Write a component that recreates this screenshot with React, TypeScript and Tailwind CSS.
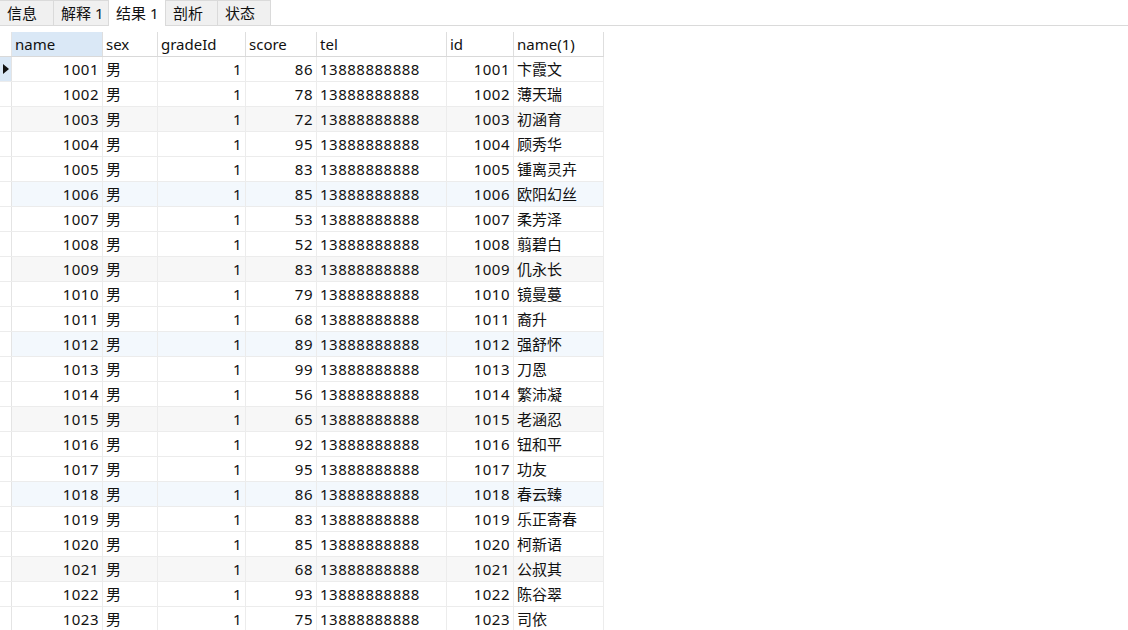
import React from 'react';

const rows: [number, string, number][] = [
  [1001, '卞霞文', 86],
  [1002, '薄天瑞', 78],
  [1003, '初涵育', 72],
  [1004, '顾秀华', 95],
  [1005, '锺离灵卉', 83],
  [1006, '欧阳幻丝', 85],
  [1007, '柔芳泽', 53],
  [1008, '翦碧白', 52],
  [1009, '仉永长', 83],
  [1010, '镜曼蔓', 79],
  [1011, '裔升', 68],
  [1012, '强舒怀', 89],
  [1013, '刀恩', 99],
  [1014, '繁沛凝', 56],
  [1015, '老涵忍', 65],
  [1016, '钮和平', 92],
  [1017, '功友', 95],
  [1018, '春云臻', 86],
  [1019, '乐正寄春', 83],
  [1020, '柯新语', 85],
  [1021, '公叔其', 68],
  [1022, '陈谷翠', 93],
  [1023, '司依', 75],
];

const tabs = ['信息', '解释 1', '结果 1', '剖析', '状态'];
const tabWidths = ['w-[54px]', 'w-[55px]', 'w-[57px]', 'w-[52px]', 'w-[53px]'];

const cols = [
  { label: 'name', w: 'w-[91px]' },
  { label: 'sex', w: 'w-[55px]' },
  { label: 'gradeId', w: 'w-[88px]' },
  { label: 'score', w: 'w-[71px]' },
  { label: 'tel', w: 'w-[130px]' },
  { label: 'id', w: 'w-[67px]' },
  { label: 'name(1)', w: 'w-[90px]' },
];

// every third row is shaded, alternating grey / pale blue
function rowBg(i: number) {
  if (i % 3 !== 2) return 'bg-white';
  return Math.floor(i / 3) % 2 === 0 ? 'bg-[#f7f7f7]' : 'bg-[#f3f8fd]';
}

const num = 'flex items-center justify-end pr-[3px] border-r border-[#ececec] tracking-[0.5px]';
const txt = 'flex items-center pl-[3px] border-r border-[#ececec]';

export default function App() {
  return (
    <div
      className="w-[1128px] h-[630px] overflow-hidden bg-white text-[15px] text-[#111]"
      style={{ fontFamily: '"Noto Sans", "Noto Sans CJK SC", sans-serif' }}
    >
      {/* Tab strip */}
      <div className="flex h-[26px] border-b border-[#dadada]">
        {tabs.map((t, i) => (
          <div
            key={t}
            className={`${tabWidths[i]} flex items-center pl-[7px] leading-none border-r border-[#dadada] ${
              i === 2 ? 'bg-white -mb-px h-[26px]' : 'bg-[#f0f0f0] border-t'
            }`}
          >
            {t}
          </div>
        ))}
      </div>

      <div className="h-[6px]" />

      {/* Grid */}
      <div className="flex flex-col w-fit">
        <div className="flex h-[25px] border-b border-[#d9d9d9]">
          <div className="w-[12px] border-r border-[#e4e4e4]" />
          {cols.map((c, i) => (
            <div
              key={c.label}
              className={`${c.w} flex items-center pl-[3px] border-r border-[#dedede] ${
                i === 0 ? 'bg-[#dae8f6]' : 'bg-white'
              }`}
            >
              {c.label}
            </div>
          ))}
        </div>

        {rows.map(([id, name, score], i) => (
          <div key={id} className={`flex h-[25px] border-b border-[#ececec] ${rowBg(i)}`}>
            <div
              className={`w-[12px] flex items-center justify-center border-r border-[#e4e4e4] ${
                i === 0 ? 'bg-[#dae8f6]' : 'bg-white'
              }`}
            >
              {i === 0 && (
                <svg width="6" height="10" viewBox="0 0 6 10">
                  <path d="M0 0 L6 5 L0 10 Z" fill="#111" />
                </svg>
              )}
            </div>
            <div className={`w-[91px] ${num}`}>{id}</div>
            <div className={`w-[55px] ${txt}`}>男</div>
            <div className={`w-[88px] ${num}`}>1</div>
            <div className={`w-[71px] ${num}`}>{score}</div>
            <div className={`w-[130px] ${txt} tracking-[0.5px]`}>13888888888</div>
            <div className={`w-[67px] ${num}`}>{id}</div>
            <div className={`w-[90px] ${txt}`}>{name}</div>
          </div>
        ))}
      </div>
    </div>
  );
}
